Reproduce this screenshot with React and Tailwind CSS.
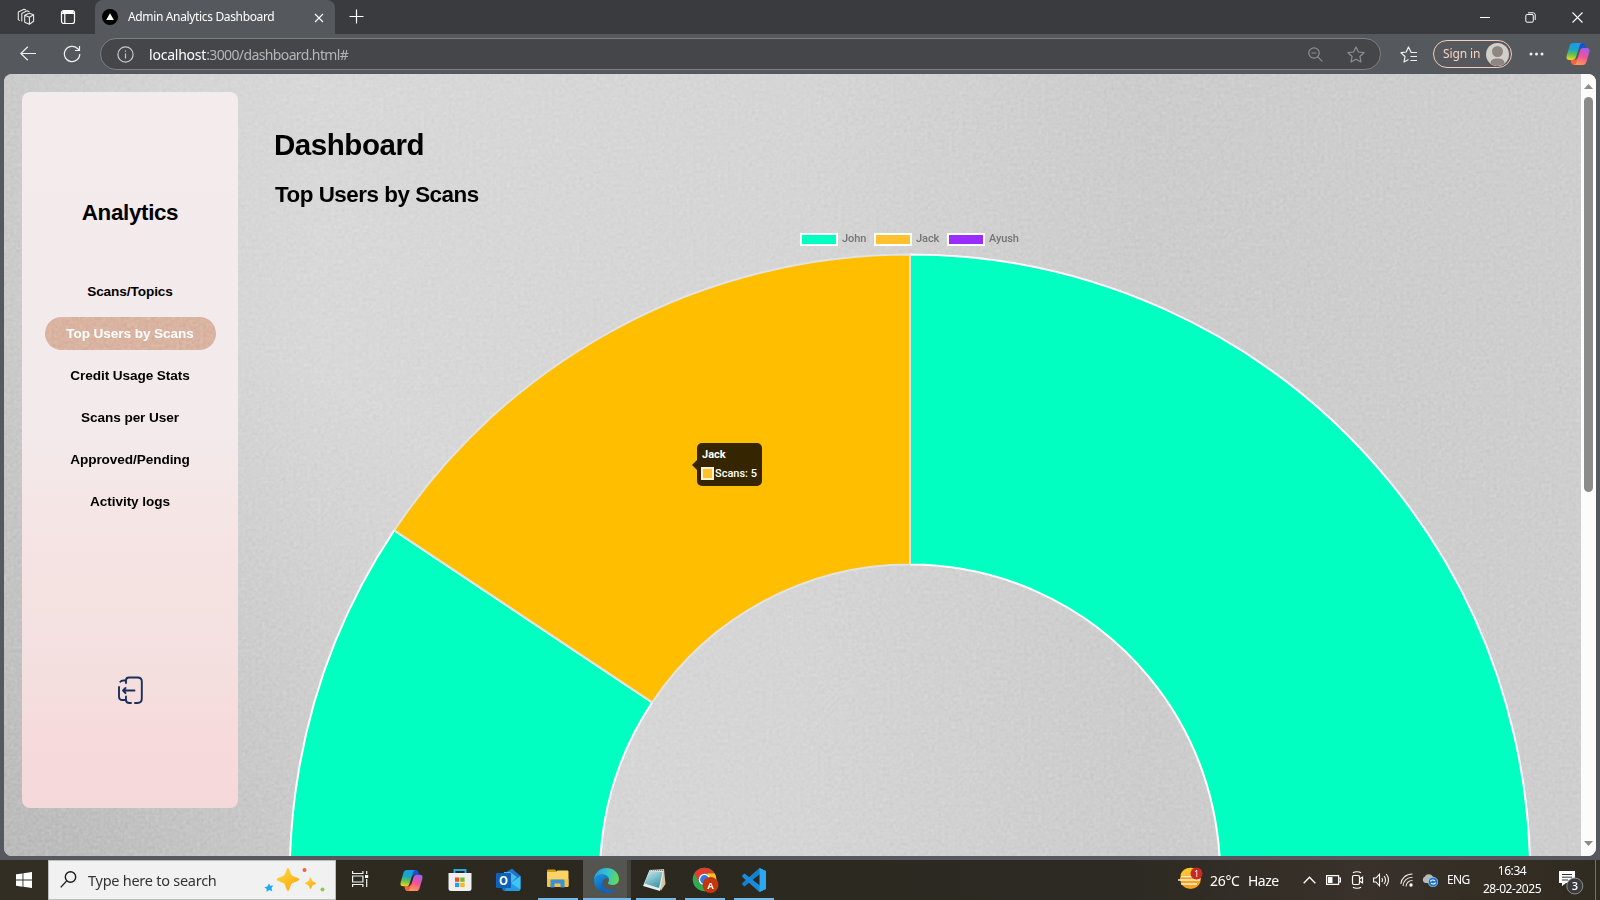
import React from "react";

const UI = "font-['Noto_Sans','Open_Sans',sans-serif]";

function Svg({ w, h, vb, className = "", children, ...rest }) {
  return (
    <svg width={w} height={h} viewBox={vb || `0 0 ${w} ${h}`} fill="none" className={`shrink-0 ${className}`} {...rest}>
      {children}
    </svg>
  );
}

function CopilotIcon({ size, id }) {
  return (
    <Svg w={size} h={size} vb="0 0 24 24">
      <defs>
        <linearGradient id={`${id}a`} x1="8" y1="1" x2="6" y2="18" gradientUnits="userSpaceOnUse">
          <stop offset="0" stopColor="#199bea" />
          <stop offset=".4" stopColor="#19a7c0" />
          <stop offset=".7" stopColor="#6cc24a" />
          <stop offset="1" stopColor="#f2d422" />
        </linearGradient>
        <linearGradient id={`${id}b`} x1="19" y1="6" x2="14" y2="23" gradientUnits="userSpaceOnUse">
          <stop offset="0" stopColor="#a45cf0" />
          <stop offset=".5" stopColor="#f0529b" />
          <stop offset="1" stopColor="#ff9a52" />
        </linearGradient>
      </defs>
      <path d="M12 1h4.500c1.400 0 2.200 1 2.700 2.400L20 6h-4.500c-1.500 0-2.500 1-3 2.700z" fill="#1a53c9" />
      <path d="M12 23H7.800c-1.400 0-2.300-1-2.700-2.400L4.500 18h4c1.500 0 2.500-1 3-2.700z" fill="#f7633f" />
      <path d="M7.200 1h8.500c-1.200.4-1.700 1.400-2.200 3L10 15c-.6 2-1.600 3-3.500 3H3.200C.8 18 0 16.300.7 13.800L3.600 4C4.200 2 5.400 1 7.200 1z" fill={`url(#${id}a)`} />
      <path d="M16.800 23H8.300c1.200-.4 1.700-1.400 2.200-3L14 9c.6-2 1.600-3 3.500-3h3.300c2.400 0 3.200 1.700 2.500 4.200L20.400 20c-.6 2-1.800 3-3.600 3z" fill={`url(#${id}b)`} />
    </Svg>
  );
}

function TabStrip() {
  return (
    <div className="flex h-[34px] shrink-0 bg-[#3a3b3e] text-white">
      <div className="flex w-[95px] items-center pl-[17px]">
        <Svg w="18" h="18" stroke="#e8e8e8" strokeWidth="1.100" strokeLinejoin="round">
          <path d="M7.700 7.200 12.200 5.300 16.600 6.800v6.400L12.400 16.300l-4.700-2.100zM7.700 7.200l4.700 2 4.200-2.400M12.400 9.200v7.100" />
          <path d="M4.800 13.500V5.500L10 2.800l2.500 1M2.800 12.600l-1.500-1V3.900L7 1.200l2 .8" />
        </Svg>
        <Svg w="16" h="16" className="ml-[25px]" stroke="#fff" strokeWidth="1.200">
          <rect x="1.500" y="1.500" width="13" height="13" rx="2.300" />
          <path d="M1.500 4.500h13M4.800 4v10.500" />
          <path d="M2.500 3h11" strokeWidth="2.500" />
        </Svg>
      </div>
      <div className="flex w-[240px] items-center rounded-t-[8px] bg-[#55585c] pl-[7px]">
        <Svg w="16" h="16">
          <circle cx="8" cy="8" r="8" fill="#000" />
          <path d="M8 4.200 11.800 11H4.200z" fill="#fff" />
        </Svg>
        <span className="ml-[10px] w-[148px] shrink-0 whitespace-nowrap text-[12px] tracking-[-0.350px]">Admin Analytics Dashboard</span>
        <Svg w="10" h="10" className="ml-[38px] mt-[1px]" stroke="#fff" strokeWidth="1.100">
          <path d="m1 1 8 8M9 1 1 9" />
        </Svg>
      </div>
      <Svg w="15" h="15" className="ml-[14px] mt-[9px]" stroke="#fff" strokeWidth="1.200">
        <path d="M7.500.5v14M.5 7.500h14" />
      </Svg>
      <div className="ml-auto flex items-center pr-[17px]">
        <Svg w="10" h="10" stroke="#fff"><path d="M0 5.500h10" /></Svg>
        <Svg w="11" h="11" className="ml-[35px]" stroke="#fff">
          <rect x=".8" y="2.500" width="7.500" height="7.700" rx="1.300" />
          <path d="M3 .8h5c1.300 0 2.200.8 2.200 2.200v5" />
        </Svg>
        <Svg w="11" h="11" className="ml-[36px]" stroke="#fff" strokeWidth="1.100"><path d="m.5.5 10 10M10.500.5l-10 10" /></Svg>
      </div>
    </div>
  );
}

function Toolbar() {
  return (
    <div className="flex h-[40px] shrink-0 items-center bg-[#55585c] text-white">
      <Svg w="17" h="16" className="ml-[20px]" stroke="#f0f0f0" strokeWidth="1.200">
        <path d="M16 7.500H.8M7.800.7.800 7.500l7 6.800" />
      </Svg>
      <Svg w="18" h="18" className="ml-[26px]" stroke="#f0f0f0" strokeWidth="1.200">
        <path d="M16.800 9A7.700 7.700 0 1 1 14.500 3.500L16.300 5.200M16.500 1v4.500H12" />
      </Svg>
      <div className="ml-[19px] flex h-[32px] w-[1281px] items-center rounded-full border border-[#7d7f82] bg-[#45464a]">
        <Svg w="17" h="17" className="ml-[16px]" stroke="#c9c9c9" strokeWidth="1.200">
          <circle cx="8.500" cy="8.500" r="7.600" />
          <path d="M8.500 7.500v5M8.500 4.500v1.300" />
        </Svg>
        <span className="ml-[15px] w-[205px] shrink-0 whitespace-nowrap text-[14px] tracking-[-0.620px] text-[#b6b6b7]">
          <span className="tracking-[-0.220px] text-white">localhost</span>:3000/dashboard.html#
        </span>
        <Svg w="15" h="15" className="ml-auto" stroke="#8e8f91" strokeWidth="1.200">
          <circle cx="6" cy="6" r="5.200" />
          <path d="M3.500 6h5M9.800 9.800l4.500 4.500" />
        </Svg>
        <Svg w="18" h="17" className="mr-[15px] ml-[24px]" stroke="#8e8f91" strokeWidth="1.200" strokeLinejoin="round">
          <path d="m9 1 2.400 5 5.600.7-4.100 3.800 1.100 5.500L9 13.300 4 16l1.100-5.500L1 6.700 6.600 6z" />
        </Svg>
      </div>
      <Svg w="18" h="17" className="ml-[19px]" stroke="#f0f0f0" strokeWidth="1.200" strokeLinejoin="round">
        <path d="M17 6.500h-5.800L8.500 1 6.200 6 1 6.700l4 3.800L4 16l4.500-2.500M10.500 10.500H17M10.500 14.500H17" />
      </Svg>
      <div className="ml-[15px] flex h-[28px] w-[79px] items-center rounded-full border border-[#f5cdb5] pl-[9px]">
        <span className="w-[38px] shrink-0 whitespace-nowrap text-[12px] tracking-[-0.100px] text-[#f8d4c0]">Sign in</span>
        <Svg w="23" h="23" className="ml-[5px]">
          <circle cx="11.500" cy="11.500" r="11.500" fill="#d2cfcb" />
          <circle cx="11.500" cy="8.500" r="5.500" fill="#8c8781" />
          <path d="M4.500 20.500c0-4 3-5 7-5s7 1 7 5a11.500 11.500 0 0 1-14 0z" fill="#8c8781" />
        </Svg>
      </div>
      <Svg w="15" h="4" className="ml-[17px]">
        <circle cx="2" cy="2" r="1.500" fill="#f0f0f0" /><circle cx="7.500" cy="2" r="1.500" fill="#f0f0f0" /><circle cx="13" cy="2" r="1.500" fill="#f0f0f0" />
      </Svg>
      <div className="ml-[22px]"><CopilotIcon size="24" id="tb" /></div>
    </div>
  );
}

function PaperTexture() {
  return (
    <svg className="absolute inset-0" width="1577" height="782">
      <defs>
        <linearGradient id="paper">
          <stop offset="0" stopColor="#cacaca" />
          <stop offset=".1" stopColor="#d4d4d4" />
          <stop offset=".2" stopColor="#d8d8d8" />
          <stop offset=".5" stopColor="#d5d5d5" />
          <stop offset=".72" stopColor="#cccccc" />
          <stop offset="1" stopColor="#cecece" />
        </linearGradient>
        <radialGradient id="shade" gradientUnits="userSpaceOnUse" cx="40" cy="860" r="620">
          <stop offset="0" stopColor="#a8a8a8" stopOpacity=".56" />
          <stop offset=".5" stopColor="#a8a8a8" stopOpacity=".25" />
          <stop offset="1" stopColor="#a8a8a8" stopOpacity="0" />
        </radialGradient>
        <filter id="grain" x="0" y="0" width="100%" height="100%" colorInterpolationFilters="sRGB">
          <feTurbulence type="fractalNoise" baseFrequency=".29" numOctaves="2" seed="11" />
          <feColorMatrix values=".11 .11 0 0 .395 .11 .11 0 0 .395 .11 .11 0 0 .395 0 0 0 0 1" />
        </filter>
      </defs>
      <rect width="1577" height="782" fill="url(#paper)" />
      <rect width="1577" height="782" fill="url(#shade)" />
      <rect width="1577" height="782" filter="url(#grain)" className="mix-blend-overlay" />
    </svg>
  );
}

const LINKS = ["Scans/Topics", "Top Users by Scans", "Credit Usage Stats", "Scans per User", "Approved/Pending", "Activity logs"];

function Sidebar() {
  return (
    <aside className="mt-[18px] ml-[18px] flex h-[716px] w-[216px] shrink-0 flex-col items-center rounded-[8px] bg-[linear-gradient(#f4ebec_0%,#f3eaeb_47%,#f5e5e4_60%,#f4dfdf_82%,#f7dadc_90%,#f5d8da_100%)] font-bold text-black">
      <h2 className="mt-[107px] text-[22.400px] leading-[28px] tracking-[-0.350px]">Analytics</h2>
      <nav className="mt-[48px] flex flex-col items-center gap-[9px] text-[13.600px] tracking-[-0.080px]">
        {LINKS.map((label, i) => (
          <a key={label} className={i === 1 ? "relative flex h-[33px] w-[171px] items-center justify-center overflow-hidden rounded-full bg-[#d9b3a0] pt-[1px] text-white" : "flex h-[33px] w-[171px] items-center justify-center pt-[1px]"}>
            {i === 1 && (
              <svg width="171" height="33" className="absolute inset-0"><rect width="171" height="33" filter="url(#grain)" className="mix-blend-overlay" /></svg>
            )}
            <span className="relative">{label}</span>
          </a>
        ))}
      </nav>
      <Svg w="25" h="28" className="mt-[158px]" stroke="#1c2f59" strokeWidth="1.900" strokeLinecap="round" strokeLinejoin="round">
        <path d="M8 7V4.500C8 2 9 1.500 11 1.500h8.500c3 0 4.300 1 4.300 4v17c0 3-1.300 4.500-4.300 4.500h-2.500M13 27h-1.500C9 27 8 26 8 24V20.500M8 4.500H5.500C4 4.500 3 4.800 2.300 5.800M1 11v9.500C1 23 2 24 4.500 24H8M16.500 14.500H5M7.500 12 5 14.500 7.500 17" />
      </Svg>
    </aside>
  );
}

const LEGEND = [
  { name: "John", box: "bg-[#00ffc1]", w: "w-[74px]" },
  { name: "Jack", box: "bg-[#ffc22e]", w: "w-[73px]" },
  { name: "Ayush", box: "bg-[#9b2cff]", w: "w-[73px]" },
];

function Chart() {
  return (
    <div className="relative">
      <div className="ml-[526px] flex h-[14px]">
        {LEGEND.map((l) => (
          <div key={l.name} className={`flex shrink-0 items-center whitespace-nowrap ${l.w}`}>
            <span className={`h-[13px] w-[38px] shrink-0 border-2 border-white ${l.box}`} />
            <span className="ml-[4px] font-['Roboto'] text-[11px] leading-[12px] font-medium tracking-[-0.080px] text-[#747474]">{l.name}</span>
          </div>
        ))}
      </div>
      <svg width="1280" height="610" className="mt-[6px] block">
        <g transform="translate(636 622.500)" stroke="#fff" strokeWidth="2" strokeLinejoin="bevel">
          <path d="M0-620A620 620 0 1 1-515.700-344.200L-257.800-172.100A310 310 0 1 0 0-310z" fill="#00ffc1" />
          <path d="M-515.700-344.200A620 620 0 0 1 0-620V-310A310 310 0 0 0-257.800-172.100z" fill="#ffbe00" stroke="#e3e3e3" />
        </g>
      </svg>
      <div className="absolute top-[211px] left-[423px] h-[43px] w-[65px] rounded-[5px] bg-[#352601] pt-[5px] pl-[4px] font-['Roboto'] text-[11px] leading-[13px] font-bold text-white">
        <Svg w="5" h="10" className="absolute top-[17px] left-[-5px]"><path d="M5 0v10L0 5z" fill="#352601" /></Svg>
        <div className="pl-px">Jack</div>
        <div className="mt-[6px] flex items-center font-medium whitespace-nowrap">
          <span className="mr-[1px] h-[13px] w-[13px] shrink-0 border-2 border-[#fff2d0] bg-[#ffc22e]" />
          Scans: 5
        </div>
      </div>
    </div>
  );
}

function Page() {
  return (
    <div className="relative mx-[4px] flex h-[782px] overflow-hidden rounded-[8px] bg-[#d2d2d2] font-['Liberation_Sans',sans-serif]">
      <PaperTexture />
      <div className="relative flex w-[1577px] shrink-0 overflow-hidden">
        <Sidebar />
        <main className="ml-[36px] w-[1286px] shrink-0 font-bold text-black">
          <h1 className="mt-[53px] text-[29.500px] leading-[36px] tracking-[-0.450px]">Dashboard</h1>
          <h2 className="mt-[18px] pl-px text-[22.400px] leading-[28px] tracking-[-0.480px]">Top Users by Scans</h2>
          <div className="mt-[23px]"><Chart /></div>
        </main>
      </div>
      <div className="relative flex w-[15px] shrink-0 flex-col items-center bg-[#fcfcfc]">
        <Svg w="9" h="5" className="mt-[10px]"><path d="M4.500 0 9 5H0z" fill="#8b8b8b" /></Svg>
        <div className="mt-[8px] h-[395px] w-[9px] rounded-full bg-[#8b8b8b]" />
        <Svg w="9" h="5" className="mt-auto mb-[10px]"><path d="M0 0h9L4.500 5z" fill="#8b8b8b" /></Svg>
      </div>
    </div>
  );
}

function TaskItem({ open, active, children }) {
  return (
    <div className={`flex h-[40px] shrink-0 flex-col items-center ${active ? "ml-px w-[48px] border-r-4 border-[#42423c] bg-[#55554f]" : "w-[49px]"}`}>
      <div className={`flex h-[38px] items-center pt-[2px] ${active ? "pl-[3px]" : ""}`}>{children}</div>
      {open && <div className={active ? "mr-[-4px] h-[2px] w-[48px] bg-[#76b9ed]" : "h-[2px] w-[40px] bg-[#76b9ed]"} />}
    </div>
  );
}

function Taskbar() {
  return (
    <div className="flex h-[40px] shrink-0 items-center bg-[linear-gradient(90deg,#322e23,#2b281f_35%,#2c2a22_70%,#39312a_85%,#302b20)] text-white">
      <Svg w="16" h="16" className="ml-[16px]">
        <path fill="#fff" d="M0 2.300 6.500 1.400v6.200H0zM7.400 1.300 16 0v7.600H7.400zM0 8.500h6.500v6.200L0 13.800zM7.400 8.500H16V16l-8.600-1.200z" />
      </Svg>
      <div className="ml-[16px] flex h-[40px] w-[288px] items-center border border-[#bdbdbd] bg-[#f1f1f1]">
        <Svg w="17" h="17" className="mt-[-2px] ml-[11px]" stroke="#1a1a1a" strokeWidth="1.400">
          <circle cx="10.500" cy="6" r="5.200" /><path d="m6.700 9.900-6 6.500" />
        </Svg>
        <span className="ml-[11px] w-[135px] shrink-0 pt-px text-[14.500px] tracking-[-0.260px] whitespace-nowrap text-[#333]">Type here to search</span>
        <Svg w="62" h="26" className="ml-[41px]">
          <defs><linearGradient id="star" x2="1" y2="1"><stop stopColor="#ffda3b" /><stop offset="1" stopColor="#f9a60f" /></linearGradient></defs>
          <path d="M24 1c1.500 0 2.400 6 3.700 7.300C29 9.600 35.500 11 35.500 12.500S29 15.400 27.700 16.700C26.400 18 25.500 24 24 24s-2.400-6-3.700-7.300C19 15.400 12.500 14 12.500 12.500S19 9.600 20.300 8.300C21.600 7 22.500 1 24 1z" fill="url(#star)" />
          <path d="M46.500 10.500c1 0 1.300 3 2 3.600s3.500 1.400 3.500 2.200-2.800 1.500-3.500 2.200-1 3.500-2 3.500-1.300-2.800-2-3.500-3.500-1.400-3.500-2.200 2.800-1.500 3.500-2.200 1-3.600 2-3.600z" fill="url(#star)" />
          <path d="m5 16.500 1.200 2.300 3-.2-1.700 2.600.8 3L5.200 23 2.500 25l.2-3L.3 20.300l3-.8z" fill="#1eaaf1" />
          <circle cx="40.500" cy="3" r="2" fill="#f2622e" /><circle cx="58.500" cy="22.500" r="2" fill="#8bcb49" />
        </Svg>
      </div>
      <Svg w="17" h="16" className="mt-[-2px] ml-[16px]" stroke="#f2f2f2" strokeWidth="1.200">
        <path d="M.6 0v2.500h10.300V0M.6 16v-2.500h10.300V16M.6 5h10.300v6H.6zM14.700 0v3M14.700 8v8" /><path d="M13 4h3.200v3H13z" fill="#fff" stroke="none" />
      </Svg>
      <div className="ml-[17px] flex">
        <TaskItem><div className="pl-px"><CopilotIcon size="23" id="tk" /></div></TaskItem>
        <TaskItem>
          <Svg w="24" h="24">
            <path d="M6.500 5V2h11v3" stroke="#2ba9e6" strokeWidth="2" />
            <path d="M.5 5h23v15.500c0 1.700-1 2.500-2.500 2.500H3C1.500 23 .5 22.200.5 20.500z" fill="#f0f0f0" />
            <path fill="#ef4e23" d="M7 9.500h4.300v4.300H7z" /><path fill="#7cb82f" d="M12.300 9.500h4.300v4.300h-4.300z" /><path fill="#1fa3ee" d="M7 14.800h4.300v4.300H7z" /><path fill="#fdb813" d="M12.300 14.800h4.300v4.300h-4.300z" />
          </Svg>
        </TaskItem>
        <TaskItem>
          <Svg w="25" h="24">
            <path d="M7 6 16 .5 24.500 8v12c0 2-1 3-3 3H9c-2 0-3-1-3-3z" fill="#1b74c8" />
            <path d="m14 4 7 5-5 5H8V4z" fill="#48b8ef" /><path d="m24.500 8-14 10v2c0 2 1 3 3 3h8c2 0 3-1 3-3z" fill="#3bc6f5" /><path d="m12 13 12.500 8.500-2 1.500H9z" fill="#229de3" />
            <rect y="5" width="15" height="15" rx="1" fill="#0f62ba" />
            <text x="7.500" y="16.500" textAnchor="middle" fill="#fff" fontSize="11.500" fontWeight="bold" className="font-['Open_Sans']">O</text>
          </Svg>
        </TaskItem>
        <TaskItem open>
          <Svg w="23" h="20" className="mt-[-2px]">
            <path d="M1 2c0-1 .4-1.500 1.500-1.500H9L11 3h-10z" fill="#d99a13" /><path d="M1 3h9l1.500-1.500H21c1 0 1.500.5 1.500 1.500v14H1z" fill="#fbd265" /><path d="M1 10h21.500v7c0 .7-.5 1-1 1H2c-.7 0-1-.5-1-1z" fill="#f5c248" />
            <path d="M4.500 18.500V12c0-1 .5-1.500 1.500-1.500h11c1 0 1.500.5 1.500 1.500v6.500h-4v-4h-6v4z" fill="#3b91d8" />
          </Svg>
        </TaskItem>
        <TaskItem open active>
          <Svg w="25" h="25" vb="0 0 24 24">
            <defs>
              <linearGradient id="edge1" x1="2" y1="5" x2="23" y2="10" gradientUnits="userSpaceOnUse"><stop stopColor="#2aa6e4" /><stop offset=".5" stopColor="#35c3cc" /><stop offset="1" stopColor="#63d957" /></linearGradient>
              <linearGradient id="edge2" x1="3" y1="7" x2="12" y2="23" gradientUnits="userSpaceOnUse"><stop stopColor="#1b8fdc" /><stop offset="1" stopColor="#0d58a6" /></linearGradient>
            </defs>
            <path d="M0 11C.6 4.600 5.700 0 12 0c6.500 0 12 4.700 12 10.500 0 3.500-2.600 5.800-6 5.800-3.200 0-4.600-1-4.600-1.900 0-.7 1-1 1-2.800C14.400 8.500 11.500 7 8.500 7 4.500 7 1.500 8.700 0 11z" fill="url(#edge1)" />
            <path d="M0 12c0-3.500 3.500-6 7.500-6 4 0 6.800 2 6.900 5.300-.6-1-1.500-1.500-2.800-1.500-2 0-3.300 2-3.300 4.500 0 4 3.500 6.900 7.800 6.900 2 0 3.700-.5 5.600-1.500C19.600 22.300 16 24 12 24 5.400 24 0 18.600 0 12z" fill="url(#edge2)" />
            <path d="M8.900 12c-1.800 5 1.800 9.200 7.200 9.200 2.700 0 5.300-1.200 5.900-1.800-2.200 3-5.500 4.600-9 4.600C7 23.500 4.500 16 8.900 12z" fill="#1564bb" />
          </Svg>
        </TaskItem>
        <TaskItem open>
          <Svg w="25" h="24" className="mr-[2px]">
            <defs><linearGradient id="note" x2=".6" y2="1"><stop stopColor="#ccecec" /><stop offset="1" stopColor="#4198a9" /></linearGradient></defs>
            <path d="m8 2 14-1 1.500 15L19 22.500z" fill="#d2c3a2" /><path d="m7.500 2 14 1-3.500 20L1 18z" fill="#e6eded" /><path d="m7.500 3 13 1-3.500 16L2.500 15.500z" fill="url(#note)" /><path d="m8 2 13 .5" stroke="#777" strokeDasharray="1 1" />
          </Svg>
        </TaskItem>
        <TaskItem open>
          <Svg w="27" h="26" className="ml-[1px]">
            <circle cx="12.500" cy="12.500" r="11.800" fill="#31a852" />
            <path d="M2.300 6.500a11.800 11.800 0 0 1 20.400 0H12.500l-5 9z" fill="#e33b2e" /><path d="M22.700 6.500a11.800 11.800 0 0 1-10.200 17.800l5-8.800-2-9z" fill="#fbc116" />
            <circle cx="12.500" cy="12.500" r="5.700" fill="#fff" /><circle cx="12.500" cy="12.500" r="4.400" fill="#3478e8" />
            <circle cx="18.500" cy="18" r="8" fill="#c5350e" />
            <text x="18.500" y="21.500" textAnchor="middle" fill="#fff" fontSize="9.500" fontWeight="bold" className="font-['Open_Sans']">A</text>
          </Svg>
        </TaskItem>
        <TaskItem open>
          <Svg w="24" h="24">
            <path d="M17.500 0 24 3v18l-6.500 3L14 20.500l4-2.500V6L2.500 18.500.3 16.800V15z" fill="#1481cd" /><path d="m2.500 5.500 16 12.500-1 6L.3 9V7.200z" fill="#1a8bd8" /><path d="M17.500 0 24 3v18l-6.500 3z" fill="#2ba8f0" />
          </Svg>
        </TaskItem>
      </div>
      <div className="ml-auto flex items-center text-[14px] tracking-[-0.300px] whitespace-nowrap">
        <Svg w="25" h="23" className="mt-[-3px]">
          <circle cx="12.500" cy="11.500" r="10.500" fill="#f6a51b" /><path d="M2.500 8a10.500 10.500 0 0 1 15-6v6z" fill="#fcc52d" />
          <path d="M3 9.500h15M0 13h22M3 17h16" stroke="#f7eddc" strokeWidth="1.600" />
          <circle cx="18.500" cy="6.500" r="6" fill="#c62b23" /><text x="18.500" y="9.700" textAnchor="middle" fontSize="9" fill="#fff" className="font-['Open_Sans']">1</text>
        </Svg>
        <span className="ml-[7px] w-[38px] shrink-0">26°C</span>
        <span className="w-[55px] shrink-0 tracking-[-0.500px]">Haze</span>
        <Svg w="13" h="8" stroke="#fff" strokeWidth="1.300"><path d="m.7 7.200 5.800-6 5.800 6" /></Svg>
        <Svg w="15" h="10" className="ml-[10px]" stroke="#fff" strokeWidth="1.200"><path d="M.6.6h12v8.800H.6zM12.600 3h1.800v4h-1.800" /><path d="M2 2h4.500v6H2z" fill="#fff" stroke="none" /></Svg>
        <Svg w="13" h="18" className="ml-[10px]" stroke="#fff" strokeWidth="1.200"><rect x="1.500" y="4.500" width="7" height="9" rx="1.500" /><path d="m8.500 8 3-2v6l-3-2M2 1.800C4 .4 8 .4 10 1.800M2 16.200c2 1.400 6 1.400 8 0" /></Svg>
        <Svg w="17" h="14" className="ml-[9px]" stroke="#fff" strokeWidth="1.100"><path d="M.6 5H3l3.500-3.800v11.600L3 9H.6zM8.800 5c.8 1.200.8 2.800 0 4M11 3c2 2.200 2 5.800 0 8M13.200 1c3 3.300 3 8.700 0 12" /></Svg>
        <Svg w="14" h="14" className="ml-[10px]" stroke="#e5e5e5" strokeWidth="1.100"><path d="M.8 11C1.500 5 6 1 12.500 1M3 13C3.500 8 7 4.200 12.500 4.200M6 13.500C6.500 10 9 7.500 12.500 7.500" /><circle cx="11" cy="12" r="1.700" fill="#fff" stroke="none" /></Svg>
        <Svg w="17" h="14" className="ml-[7px]"><path d="M4 10a3.500 3.500 0 0 1 0-6.500C5 1 10 0 12 4c3 0 4 4 2 6z" fill="#b9b9b9" /><circle cx="12" cy="9" r="4.800" fill="#1672cc" stroke="#dceaf6" strokeWidth=".6" /><path d="M9.500 8.500c.5-2 3.500-2 4.500-.5M14.500 9.500c-.5 2-3.500 2-4.500.5" stroke="#fff" strokeWidth="1.100" /></Svg>
        <span className="ml-[9px] w-[24px] shrink-0 text-[12px] tracking-[-0.600px]">ENG</span>
        <div className="ml-[11px] flex w-[60px] shrink-0 flex-col items-center text-[12px] leading-[18px] tracking-[-0.450px]"><span>16:34</span><span>28-02-2025</span></div>
        <Svg w="25" h="25" className="mt-[4px] ml-[17px]">
          <path d="M0 1h16v12h-9l-4 3v-3H0z" fill="#fff" /><path d="M3 4.500h10M3 7.200h10M3 10h6" stroke="#333" />
          <circle cx="15.800" cy="16" r="8" fill="#3a3b3d" stroke="#8c8c8c" /><text x="15.800" y="20" textAnchor="middle" fontSize="11" fontWeight="600" fill="#fff" className="font-['Open_Sans']">3</text>
        </Svg>
        <div className="ml-[11px] h-[40px] w-[5px] border-l border-[#77736b]" />
      </div>
    </div>
  );
}

export default function App() {
  return (
    <div className={`flex h-[900px] w-[1600px] flex-col overflow-hidden bg-[#55585c] ${UI}`}>
      <TabStrip />
      <Toolbar />
      <Page />
      <div className="mt-auto"><Taskbar /></div>
    </div>
  );
}
